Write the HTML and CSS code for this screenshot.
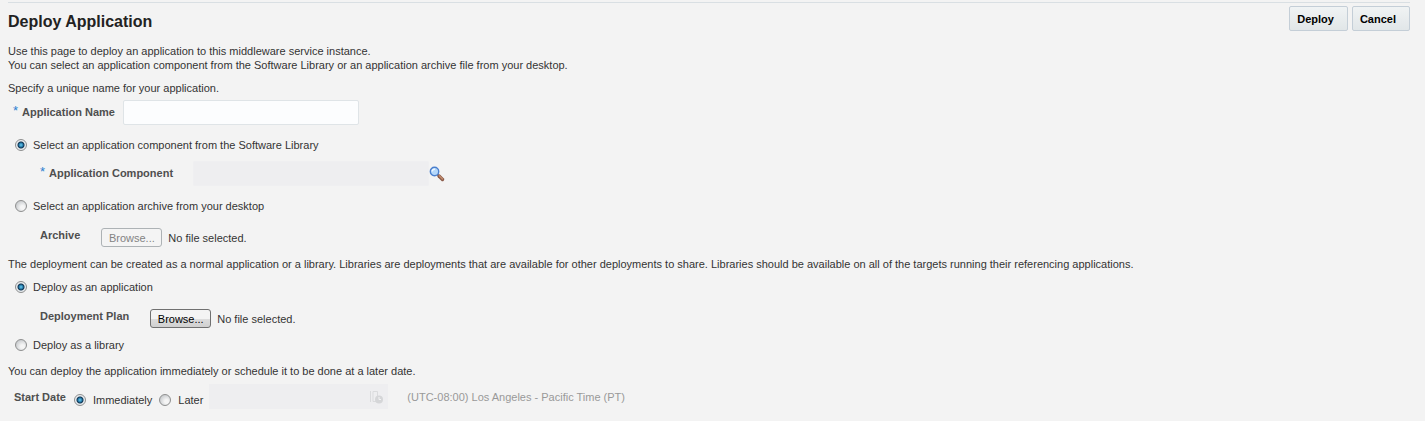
FILE: index.html
```html
<!DOCTYPE html>
<html lang="en">
<head>
    <meta charset="UTF-8">
    <meta name="viewport" content="width=device-width, initial-scale=1.0">
    <title>Deploy Application</title>
    <link rel="stylesheet" href="styles.css">
</head>
<body>
    <form class="page">
        <header class="header">
            <h1>Deploy Application</h1>
            <div class="actions">
                <button type="submit" class="action">Deploy</button>
                <button type="button" class="action">Cancel</button>
            </div>
        </header>

        <p class="intro">Use this page to deploy an application to this middleware service instance.<br>
        You can select an application component from the Software Library or an application archive file from your desktop.</p>

        <p class="text">Specify a unique name for your application.</p>
        <div class="row name-row">
            <span class="required">*</span>
            <label class="label" for="appName">Application Name</label>
            <input type="text" class="field" id="appName" name="appName">
        </div>

        <div class="option">
            <input type="radio" id="fromLibrary" name="source" checked>
            <label for="fromLibrary">Select an application component from the Software Library</label>
        </div>
        <div class="row component-row">
            <span class="required">*</span>
            <label class="label" for="component">Application Component</label>
            <input type="text" class="field" id="component" name="component" disabled>
            <button type="button" class="search" aria-label="Search">
                <svg width="16" height="16" viewBox="0 0 16 16">
                    <path d="M8.5 8.5L10.5 10.5" stroke="#7d8794" stroke-width="2"/>
                    <path d="M10 10L13.500 13.500" stroke="#8a5a48" stroke-width="3.4" stroke-linecap="round"/>
                    <path d="M10.3 9.8L13.4 12.9" stroke="#c08a6c" stroke-width="1.5" stroke-linecap="round"/>
                    <circle cx="5.5" cy="5.5" r="4.2" fill="#b4d8fb" stroke="#4b7fcd" stroke-width="1.4"/>
                    <path d="M3.2 5.4A2.4 2.4 0 0 1 6 3.2" fill="none" stroke="#f0f8ff" stroke-width="1.5"/>
                </svg>
            </button>
        </div>

        <div class="option">
            <input type="radio" id="fromDesktop" name="source">
            <label for="fromDesktop">Select an application archive from your desktop</label>
        </div>
        <div class="row file-row">
            <label class="label" for="archive">Archive</label>
            <button type="button" class="browse" id="archive" disabled>Browse...</button>
            <span>No file selected.</span>
        </div>

        <p class="text library-text">The deployment can be created as a normal application or a library. Libraries are deployments that are available for other deployments to share. Libraries should be available on all of the targets running their referencing applications.</p>
        <div class="option deploy-option">
            <input type="radio" id="asApplication" name="deployAs" checked>
            <label for="asApplication">Deploy as an application</label>
        </div>
        <div class="row file-row">
            <label class="label" for="plan">Deployment Plan</label>
            <button type="button" class="browse" id="plan">Browse...</button>
            <span>No file selected.</span>
        </div>
        <div class="option library-option">
            <input type="radio" id="asLibrary" name="deployAs">
            <label for="asLibrary">Deploy as a library</label>
        </div>

        <p class="text date-text">You can deploy the application immediately or schedule it to be done at a later date.</p>
        <div class="row date-row">
            <span class="label">Start Date</span>
            <div class="choices">
                <input type="radio" id="immediately" name="start" checked>
                <label for="immediately">Immediately</label>
                <input type="radio" id="later" name="start">
                <label for="later">Later</label>
            </div>
            <div class="date">
                <input type="text" class="date-input" aria-label="Start date" disabled>
                <svg width="16" height="16" viewBox="0 0 16 16">
                    <path d="M2.5 2V13M5 2.500H9.500V7M5 2.500V12.500H8" fill="none" stroke="#dadbdd"/>
                    <circle cx="11" cy="10.500" r="4" fill="#d5d6d8"/>
                    <path d="M11 8V10.500H13" fill="none" stroke="#f3f3f4"/>
                </svg>
            </div>
            <span class="zone">(UTC-08:00) Los Angeles - Pacific Time (PT)</span>
        </div>
    </form>
</body>
</html>
```

FILE: styles.css
```css
body {
    margin: 0;
    background-color: #f3f3f3;
    color: #333;
    font-family: Arial, "Liberation Sans", sans-serif;
    font-size: 11px;
    line-height: 14px;
}

.page {
    padding: 2px 15px 12px 8px;
}

.header {
    display: flex;
    justify-content: space-between;
    border-top: 1px solid #d9dfe3;
    padding-top: 3px;
    height: 26px;
}

h1 {
    margin: 6px 0 0;
    font-size: 16px;
    line-height: 20px;
    color: #222;
}

.actions {
    display: flex;
    gap: 4px;
}

.action {
    box-sizing: border-box;
    height: 25px;
    padding: 0 13px 0 7px;
    border: 1px solid #c4ced7;
    border-radius: 2px;
    background: linear-gradient(#f0f3f4, #e1e6e8);
    color: #000;
    font: bold 11px Arial, "Liberation Sans", sans-serif;
}

.intro {
    margin: 12px 0 0;
}

.text {
    margin: 9px 0 0;
}

.row {
    display: flex;
    align-items: center;
}

.label {
    padding-bottom: 2px;
    color: #4f4f4f;
    font-weight: bold;
}

.required {
    width: 9px;
    padding-bottom: 4px;
    color: #2a7fd0;
    font-size: 13px;
}

.field {
    box-sizing: border-box;
    width: 236px;
    height: 25px;
    padding: 0 5px;
    border: 1px solid #dfe4e7;
    border-radius: 2px;
    background-color: #fcfdfe;
    font: inherit;
}

.field:disabled {
    border-color: #efeff1;
    background-color: #eeeef0;
}

.name-row {
    margin-top: 5px;
    padding-left: 5px;
}

.name-row .field {
    margin-left: 8px;
}

.option {
    display: flex;
    align-items: center;
    gap: 6px;
    margin-top: 13px;
    padding-left: 7px;
}

input[type="radio"] {
    appearance: none;
    box-sizing: border-box;
    flex: none;
    width: 12px;
    height: 12px;
    margin: 0;
    border: 1px solid #8e8f8f;
    border-radius: 50%;
    background: radial-gradient(circle at 65% 65%, #f5f5f5 20%, #c9cccf 75%);
}

input[type="radio"]:checked {
    background: radial-gradient(circle, #6fd0f2 0, #2278a8 2px, #12334f 3px, #e8ecef 4px);
}

.component-row {
    margin-top: 9px;
    padding-left: 32px;
}

.component-row .field {
    margin-left: 20px;
}

.search {
    display: flex;
    padding: 0;
    border: 0;
    background: none;
}

.file-row {
    align-items: flex-start;
    margin-top: 15px;
    padding-left: 32px;
}

.file-row span {
    margin: 3px 0 0 6px;
}

.browse {
    box-sizing: border-box;
    width: 61px;
    height: 19px;
    margin-left: 21px;
    padding: 0;
    border: 1px solid #707070;
    border-radius: 3px;
    background: linear-gradient(#f4f4f4 50%, #dedede 50%, #d0d0d0);
    color: #000;
    font: inherit;
}

.browse:disabled {
    border-color: #adb2b5;
    background: #f4f4f4;
    color: #838383;
}

.library-text {
    margin-top: 10px;
}

.deploy-option {
    margin-top: 9px;
}

.library-option {
    margin-top: 10px;
}

.date-text {
    margin-top: 12px;
}

.date-row {
    margin-top: 6px;
    padding-left: 6px;
}

.date-row .label {
    padding-bottom: 0;
}

.choices {
    display: flex;
    align-items: center;
    gap: 7px;
    margin: 7px 6px 0 8px;
}

.date {
    display: flex;
    align-items: center;
    box-sizing: border-box;
    width: 179px;
    height: 25px;
    padding-right: 4px;
    background-color: #eeeef0;
}

.date-input {
    flex: 1;
    min-width: 0;
    border: 0;
    background: none;
    font: inherit;
}

.zone {
    margin-left: 19px;
    color: #999;
}
```
